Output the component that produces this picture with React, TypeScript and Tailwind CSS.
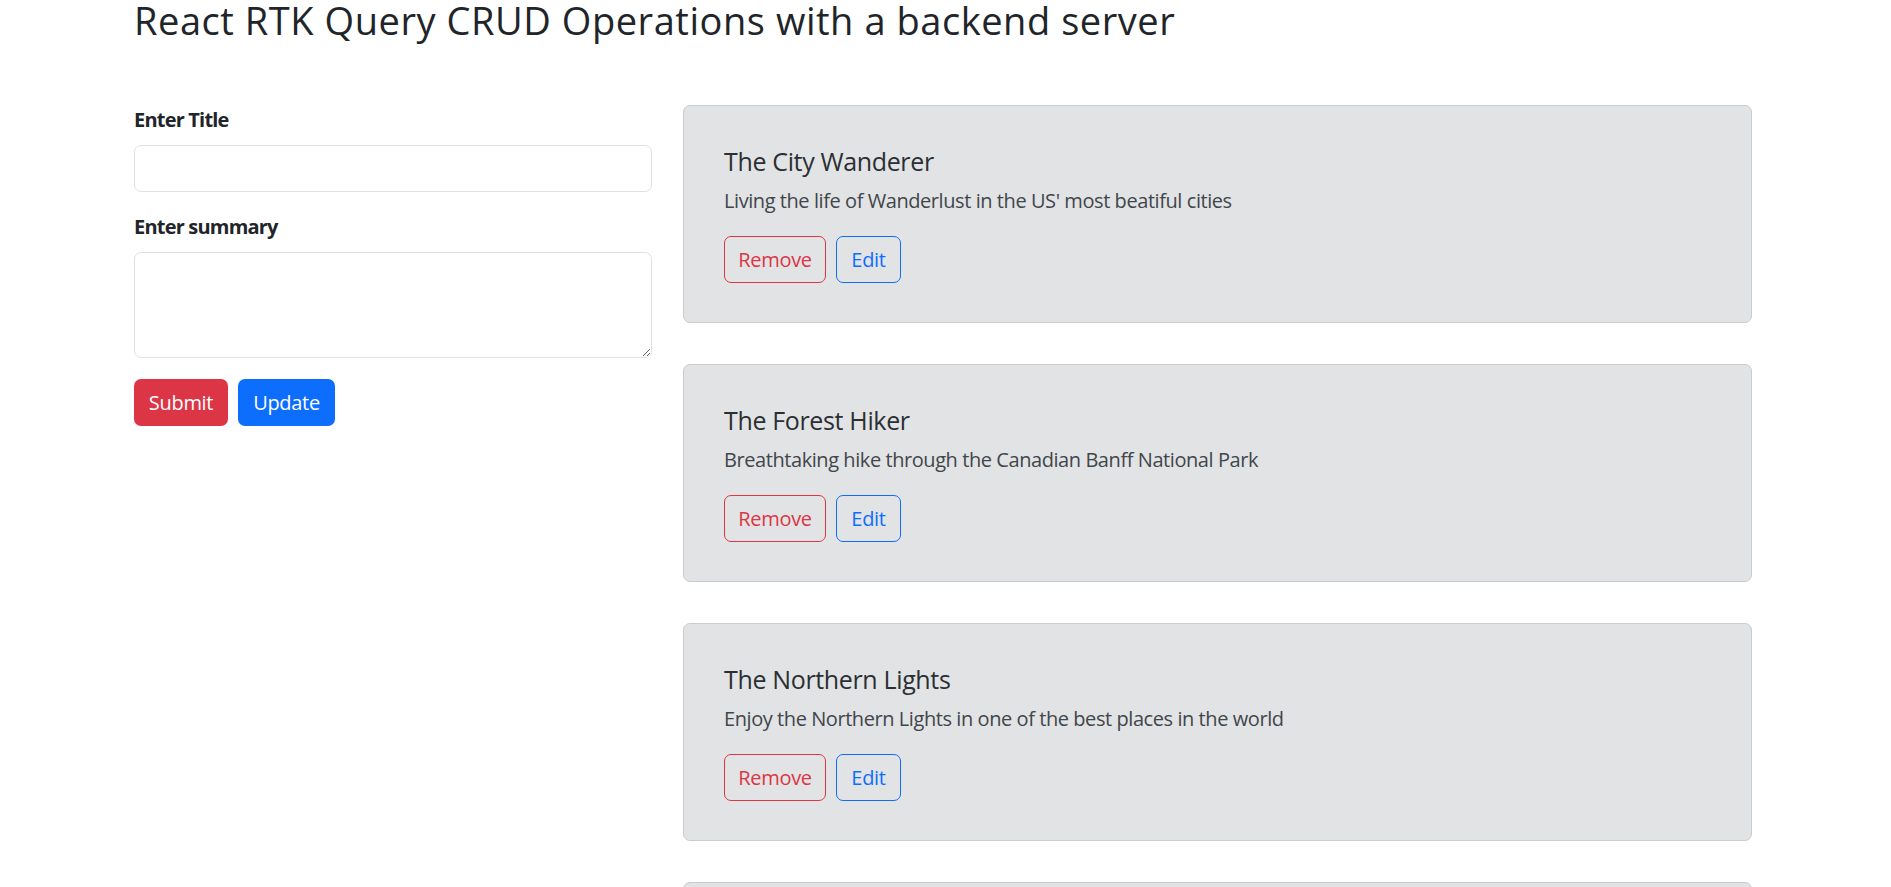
import React from "react";

const posts = [
  { title: "The City Wanderer", body: "Living the life of Wanderlust in the US' most beatiful cities" },
  { title: "The Forest Hiker", body: "Breathtaking hike through the Canadian Banff National Park" },
  { title: "The Northern Lights", body: "Enjoy the Northern Lights in one of the best places in the world" },
  { title: "The Desert Explorer", body: "Crossing the dunes under the endless sky" },
];

export default function App() {
  return (
    <div
      className="min-h-screen bg-white text-[#212529] overflow-hidden"
      style={{ fontFamily: '"Open Sans", "Noto Sans", sans-serif' }}
    >
      <div className="pl-[134px] pr-[139px]">
        <h1 className="text-[38px] leading-[40px] font-medium tracking-[0.55px] m-0 h-[105px] whitespace-nowrap">
          React RTK Query CRUD Operations with a backend server
        </h1>
        <div className="flex gap-[31px] items-start">
          <div className="w-[518px] shrink-0">
            <label className="block font-bold text-[20px] leading-[30px] tracking-[-0.8px] mb-[10px]">Enter Title</label>
            <input
              type="text"
              className="block w-full h-[47px] border border-[#dee2e6] rounded-[7px] px-[15px] text-[20px] outline-none bg-white"
            />
            <label className="block font-bold text-[20px] leading-[30px] tracking-[-0.8px] mb-[10px] mt-[20px]">Enter summary</label>
            <textarea
              className="block w-full h-[106px] border border-[#dee2e6] rounded-[7px] px-[15px] py-[7px] text-[20px] outline-none bg-white"
            />
            <div className="flex gap-[10px] mt-[21px]">
              <button className="w-[94px] h-[47px] rounded-[7px] bg-[#dc3545] text-white text-[20px] leading-[30px] tracking-[-0.3px] flex items-center justify-center">
                Submit
              </button>
              <button className="w-[97px] h-[47px] rounded-[7px] bg-[#0d6efd] text-white text-[20px] leading-[30px] tracking-[-0.3px] flex items-center justify-center">
                Update
              </button>
            </div>
          </div>
          <div className="w-[1069px] shrink-0 flex flex-col gap-[41px]">
            {posts.map((p) => (
              <div
                key={p.title}
                className="bg-[#e2e3e5] border border-[#c9cbce] rounded-[7px] pt-[40px] pb-[39px] pl-[40px] pr-[40px]"
              >
                <h5 className="text-[25px] leading-[30px] font-medium tracking-[-0.35px] text-[#2b2f33] mb-[10px]">{p.title}</h5>
                <p className="text-[20px] leading-[30px] tracking-[-0.43px] text-[#41464b] mb-[20px]">{p.body}</p>
                <div className="flex gap-[10px]">
                  <button className="w-[102px] h-[47px] rounded-[7px] border border-[#dc3545] text-[#dc3545] text-[20px] leading-[30px] tracking-[-0.3px] flex items-center justify-center">
                    Remove
                  </button>
                  <button className="w-[65px] h-[47px] rounded-[7px] border border-[#0d6efd] text-[#0d6efd] text-[20px] leading-[30px] tracking-[-0.3px] flex items-center justify-center">
                    Edit
                  </button>
                </div>
              </div>
            ))}
          </div>
        </div>
      </div>
    </div>
  );
}
